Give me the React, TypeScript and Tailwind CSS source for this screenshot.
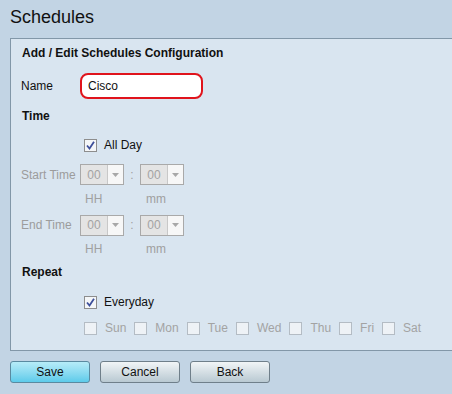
const font = { fontFamily: '"Liberation Sans", Arial, sans-serif' };

function Check({ checked = false, disabled = false }: { checked?: boolean; disabled?: boolean }) {
  return (
    <span
      className={`flex h-[13px] w-[13px] items-center justify-center border ${
        disabled ? "border-[#b4bcc4] bg-[#eef2f6]" : "border-[#8d8d8d] bg-[#f4f6f8]"
      }`}
    >
      {checked && (
        <svg width="9" height="9" viewBox="0 0 9 9">
          <path d="M1 4.5 L3.5 7.5 L8 0.8" fill="none" stroke="#3d4f9a" strokeWidth="1.8" />
        </svg>
      )}
    </span>
  );
}

function TimeSelect() {
  return (
    <div className="flex h-[21px] w-[44px] border border-[#a9a9a9] bg-[#e4e4e4]">
      <span className="flex flex-1 items-center justify-center text-[12px] text-[#a3a3a3]">00</span>
      <span className="flex w-[16px] items-center justify-center border-l border-[#c8c8c8] bg-[#f7f7f7]">
        <svg width="7" height="4" viewBox="0 0 7 4">
          <path d="M0 0 L7 0 L3.5 4 Z" fill="#a8a8a8" />
        </svg>
      </span>
    </div>
  );
}

function TimeRow({ label, h }: { label: string; h: string }) {
  return (
    <div className={`flex items-center ${h}`}>
      <span className="w-[59px] text-[#9c9c9c]">{label}</span>
      <TimeSelect />
      <span className="w-[16px] text-center text-[#a0a0a0]">:</span>
      <TimeSelect />
    </div>
  );
}

function UnitRow({ h }: { h: string }) {
  return (
    <div className={`flex items-center text-[#a0a0a0] ${h}`}>
      <span className="w-[64px]" />
      <span className="w-[61px]">HH</span>
      <span>mm</span>
    </div>
  );
}

const days = ["Sun", "Mon", "Tue", "Wed", "Thu", "Fri", "Sat"];

function Button({ label, primary = false }: { label: string; primary?: boolean }) {
  return (
    <button
      className={`h-[22px] w-[80px] rounded-[3px] border text-[12px] ${
        primary
          ? "border-[#5a8aa0] bg-gradient-to-b from-[#b6ecf8] to-[#5ccbea] text-[#111]"
          : "border-[#6f7f8a] bg-gradient-to-b from-[#f1f5f7] to-[#b9c9d2] text-[#111]"
      }`}
    >
      {label}
    </button>
  );
}

export default function App() {
  return (
    <div className="h-[394px] w-[452px] overflow-hidden bg-[#c2d4e4] text-[12px] text-[#111]" style={font}>
      <div className="flex h-[38px] items-center pl-[10px] pb-[4px] text-[18px] text-[#111]">Schedules</div>
      <div className="ml-[10px] border-l border-t border-b border-[#8297a8] bg-[#d9e5f0] pl-[10px] pb-[14px]">
        <div className="flex h-[28px] items-center pl-[1px] font-bold">Add / Edit Schedules Configuration</div>
        <div className="flex h-[38px] items-center">
          <span className="w-[59px]">Name</span>
          <div className="flex h-[26px] w-[123px] items-center rounded-[8px] border-2 border-[#e0141c] bg-white pl-[6px]">
            Cisco
          </div>
        </div>
        <div className="flex h-[22px] items-center pl-[1px] font-bold">Time</div>
        <div className="flex h-[36px] items-center gap-[7px] pl-[63px]">
          <Check checked />
          <span>All Day</span>
        </div>
        <TimeRow label="Start Time" h="h-[23px]" />
        <UnitRow h="h-[26px]" />
        <TimeRow label="End Time" h="h-[26px]" />
        <UnitRow h="h-[22px]" />
        <div className="flex h-[24px] items-center pl-[1px] font-bold">Repeat</div>
        <div className="flex h-[36px] items-center gap-[7px] pl-[63px]">
          <Check checked />
          <span>Everyday</span>
        </div>
        <div className="flex h-[16px] items-center pl-[63px] text-[#a3a3a3]">
          {days.map((d) => (
            <div key={d} className="mr-[8px] flex items-center gap-[8px]">
              <Check disabled />
              <span>{d}</span>
            </div>
          ))}
        </div>
      </div>
      <div className="flex gap-[10px] pl-[10px] pt-[10px]">
        <Button label="Save" primary />
        <Button label="Cancel" />
        <Button label="Back" />
      </div>
    </div>
  );
}
